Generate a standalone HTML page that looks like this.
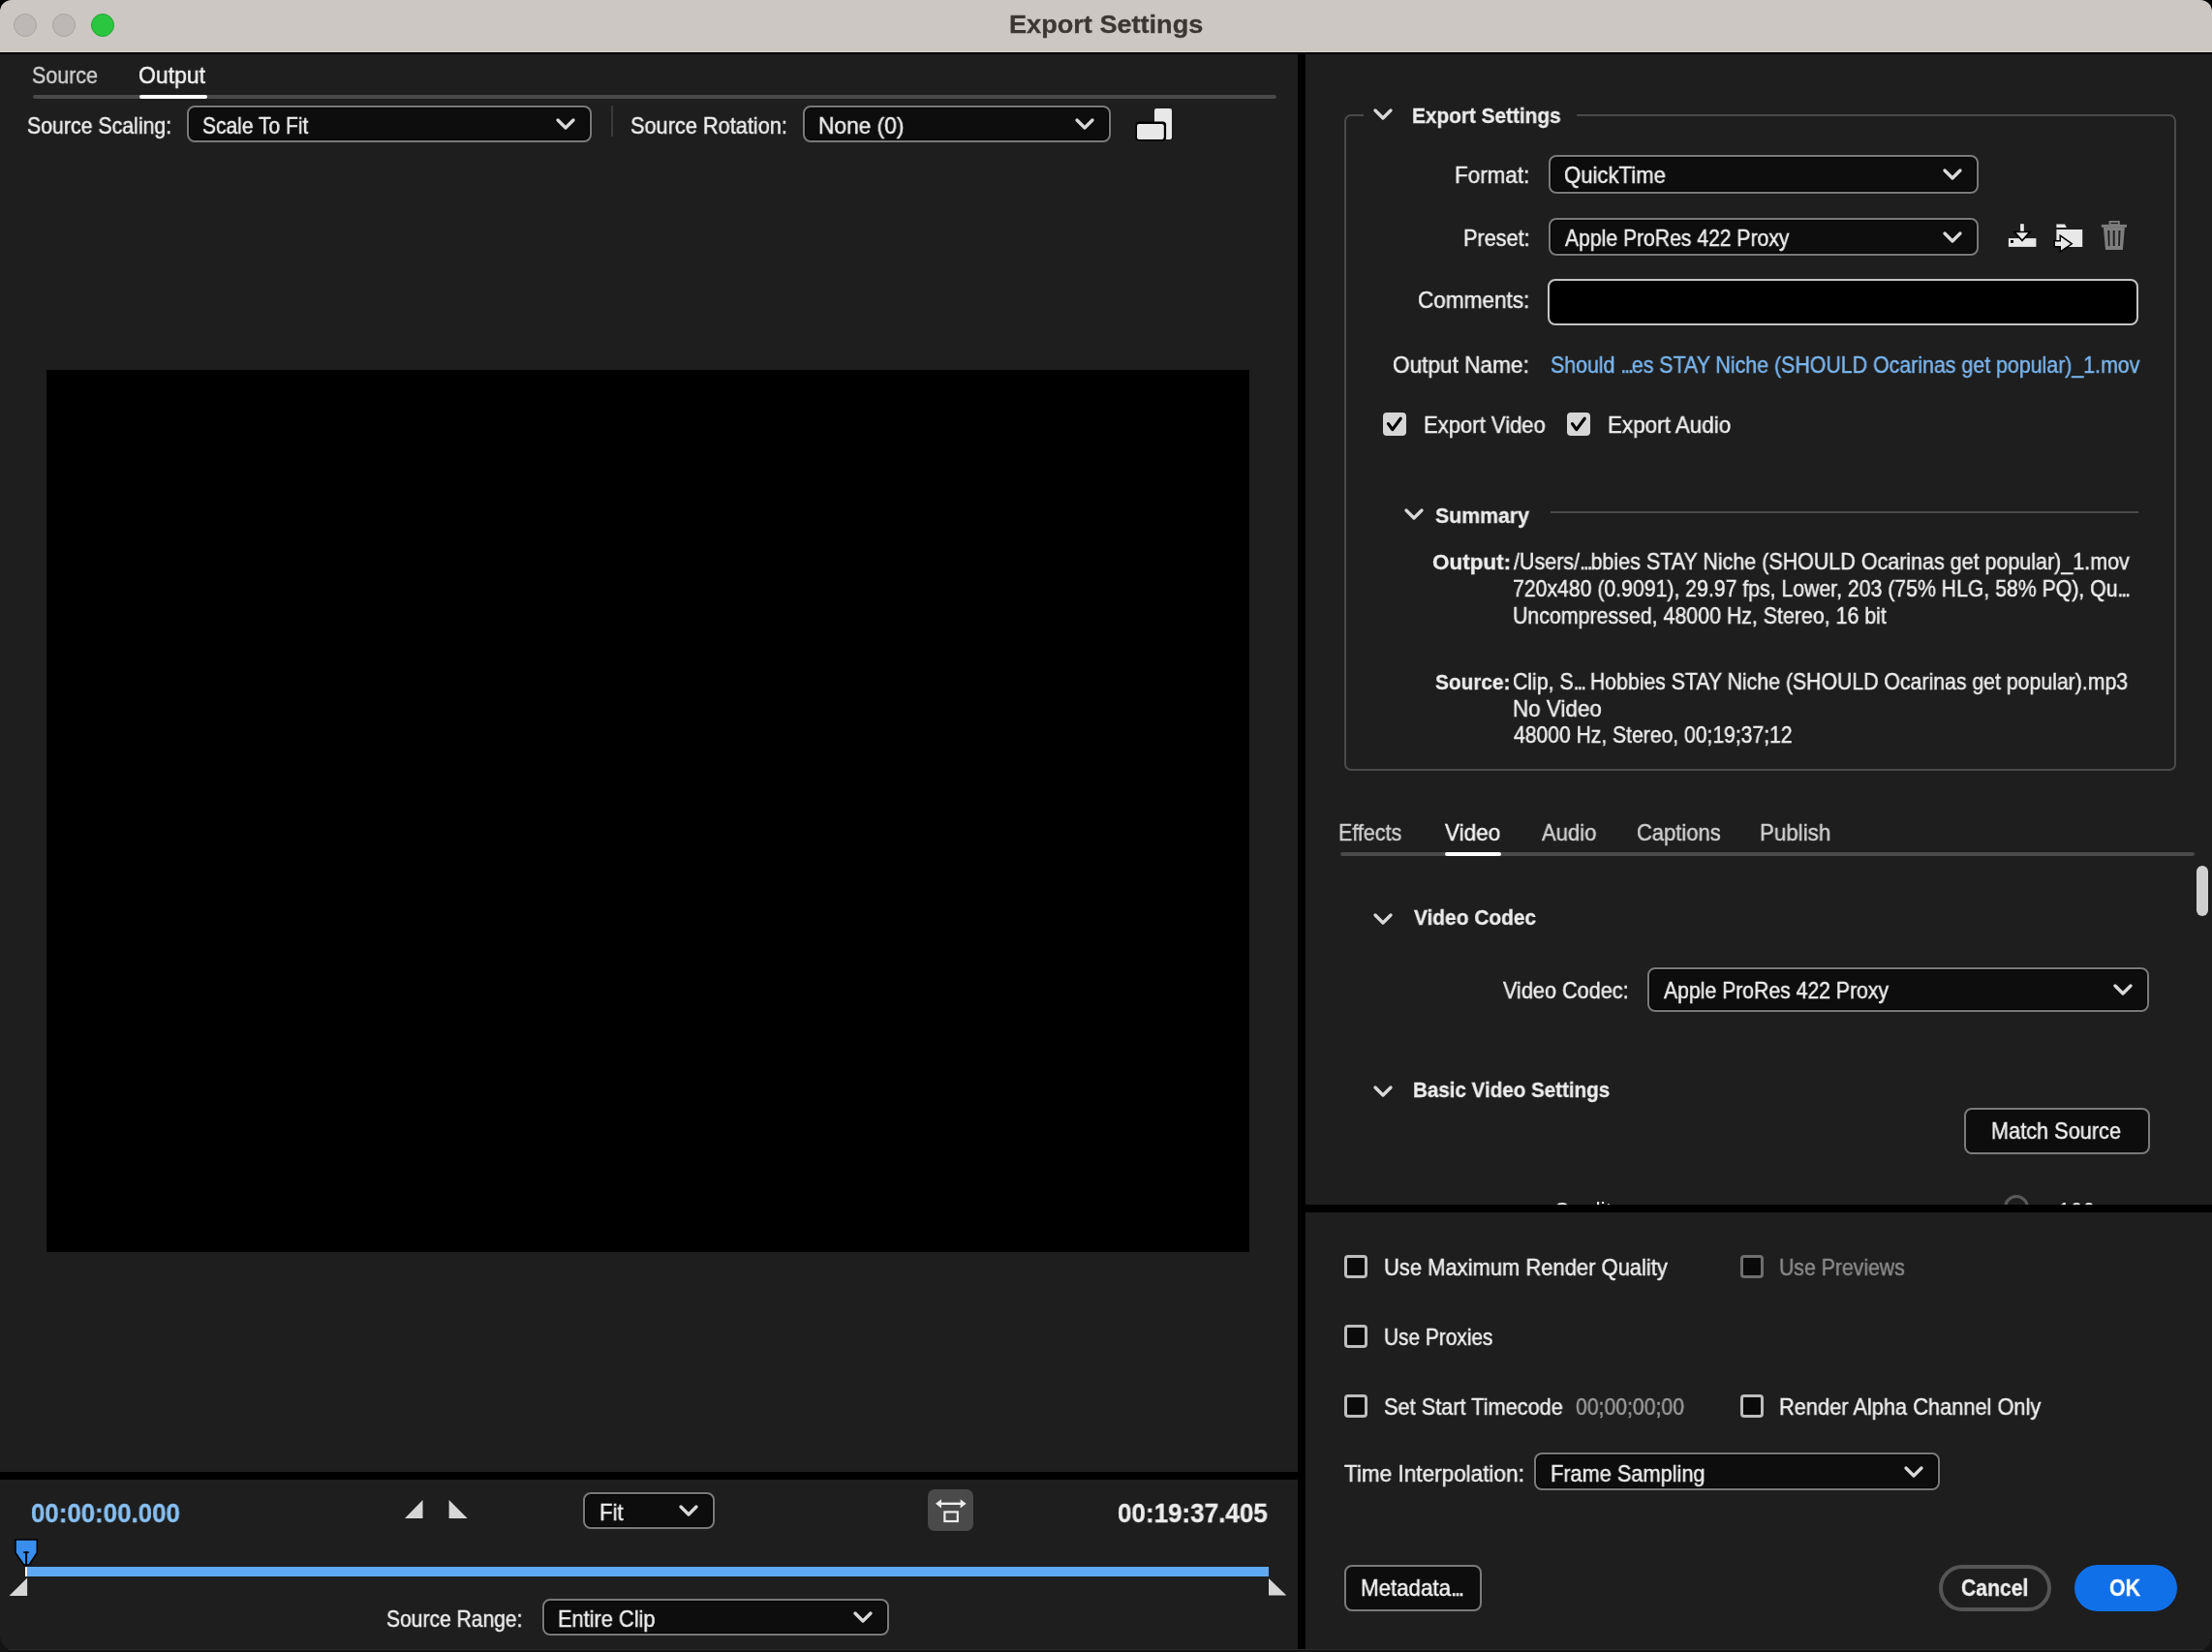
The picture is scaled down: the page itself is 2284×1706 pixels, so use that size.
<!DOCTYPE html>
<html><head><meta charset="utf-8"><style>
html,body{margin:0;padding:0;background:linear-gradient(#000 50%,#141414 50%);}
body{width:2284px;height:1706px;overflow:hidden;position:relative;font-family:'Liberation Sans', sans-serif;}
.t{position:absolute;line-height:1;white-space:pre;transform-origin:0 0;font-family:'Liberation Sans', sans-serif;will-change:transform;}
svg{overflow:visible}
</style></head><body>
<div style="position:absolute;left:0;top:0;width:2284px;height:1706px;overflow:hidden;border-radius:12px 12px 18px 18px">
<div style="position:absolute;left:0px;top:0px;width:2284px;height:1706px;background:#1E1E1E"></div><div style="position:absolute;left:0px;top:0px;width:2284px;height:54px;background:#CCC7C3"></div><div style="position:absolute;left:0px;top:52.5px;width:2284px;height:1.5px;background:#D6D2CE"></div><div style="position:absolute;left:0px;top:54px;width:2284px;height:1.5px;background:#000"></div><div style="position:absolute;left:14px;top:14px;width:24px;height:24px;box-sizing:border-box;border-radius:50%;background:#BDB8B5;border:1px solid #A9A4A1"></div><div style="position:absolute;left:54px;top:14px;width:24px;height:24px;box-sizing:border-box;border-radius:50%;background:#BDB8B5;border:1px solid #A9A4A1"></div><div style="position:absolute;left:94px;top:14px;width:24px;height:24px;box-sizing:border-box;border-radius:50%;background:#2BC63F;border:1px solid #22A533"></div><div style="position:absolute;left:34px;top:98px;width:1284px;height:4px;background:#4A4A4A;border-radius:2px"></div><div style="position:absolute;left:144px;top:98px;width:70px;height:4px;background:#FFFFFF;border-radius:2px"></div><div style="position:absolute;left:193px;top:109px;width:418px;height:38px;box-sizing:border-box;border:2px solid #7A7A7A;border-radius:8px;background:#0D0D0D;box-shadow:inset 0 0 0 1px #000"></div><svg style="position:absolute;left:570px;top:118.0px" width="28" height="20"><polyline points="6,6 14,14 22,6" fill="none" stroke="#D9D9D9" stroke-width="3.3" stroke-linecap="round" stroke-linejoin="round"/></svg><div style="position:absolute;left:631px;top:109px;width:2px;height:32px;background:#3A3A3A"></div><div style="position:absolute;left:829px;top:109px;width:318px;height:38px;box-sizing:border-box;border:2px solid #7A7A7A;border-radius:8px;background:#0D0D0D;box-shadow:inset 0 0 0 1px #000"></div><svg style="position:absolute;left:1106px;top:118.0px" width="28" height="20"><polyline points="6,6 14,14 22,6" fill="none" stroke="#D9D9D9" stroke-width="3.3" stroke-linecap="round" stroke-linejoin="round"/></svg><svg style="position:absolute;left:1170px;top:108px" width="44" height="40"><rect x="22" y="4" width="18" height="32" rx="2.2" fill="#E8E8E8"/><rect x="2.5" y="17.6" width="31.6" height="20" rx="3.5" fill="#000"/><rect x="4" y="20" width="27.8" height="16" rx="2.2" fill="#E8E8E8"/></svg><div style="position:absolute;left:48px;top:382px;width:1242px;height:911px;background:#000"></div><div style="position:absolute;left:0px;top:1520px;width:1340px;height:8px;background:#000"></div><svg style="position:absolute;left:410px;top:1545px" width="80" height="30"><polygon points="8,23 26.5,4 26.5,23" fill="#D6D6D6"/><polygon points="53.6,4 53.6,23 72.6,23" fill="#D6D6D6"/></svg><div style="position:absolute;left:602px;top:1541px;width:136px;height:38px;box-sizing:border-box;border:2px solid #7A7A7A;border-radius:8px;background:#0D0D0D;box-shadow:inset 0 0 0 1px #000"></div><svg style="position:absolute;left:697px;top:1550.0px" width="28" height="20"><polyline points="6,6 14,14 22,6" fill="none" stroke="#D9D9D9" stroke-width="3.3" stroke-linecap="round" stroke-linejoin="round"/></svg><div style="position:absolute;left:958px;top:1538px;width:47px;height:43px;background:#4A4A4A;border-radius:7px"></div><svg style="position:absolute;left:958px;top:1538px" width="47" height="43"><line x1="10.5" y1="14.8" x2="37" y2="14.8" stroke="#EDEDED" stroke-width="2.4"/><polygon points="8,14.8 14,10.2 14,19.4" fill="#EDEDED"/><polygon points="39.6,14.8 33.6,10.2 33.6,19.4" fill="#EDEDED"/><rect x="17.4" y="23.4" width="13.4" height="9.6" fill="none" stroke="#EDEDED" stroke-width="2.2"/></svg><div style="position:absolute;left:28px;top:1618px;width:1282px;height:10px;background:#5EA8F4"></div><div style="position:absolute;left:26px;top:1618px;width:2px;height:10px;background:#FFFFFF"></div><svg style="position:absolute;left:0px;top:1580px" width="60" height="80"><polygon points="16,10 38.3,10 38.3,23.5 30,36 24.5,36 16,23.5" fill="#3A8EEB" stroke="#000" stroke-width="1.5" stroke-linejoin="round"/><rect x="24.2" y="22.3" width="5.6" height="1.6" fill="#000"/><rect x="26.1" y="22.3" width="2" height="15" fill="#000"/><polygon points="9.5,68 28.1,49.6 28.1,68" fill="#D6D6D6"/></svg><svg style="position:absolute;left:1300px;top:1620px" width="40" height="40"><polygon points="10,10 10,27.5 28.3,27.5" fill="#D6D6D6"/></svg><div style="position:absolute;left:560px;top:1651px;width:358px;height:38px;box-sizing:border-box;border:2px solid #7A7A7A;border-radius:8px;background:#0D0D0D;box-shadow:inset 0 0 0 1px #000"></div><svg style="position:absolute;left:877px;top:1660.0px" width="28" height="20"><polyline points="6,6 14,14 22,6" fill="none" stroke="#D9D9D9" stroke-width="3.3" stroke-linecap="round" stroke-linejoin="round"/></svg><div style="position:absolute;left:1340px;top:55px;width:8px;height:1651px;background:#000"></div><div style="position:absolute;left:1388px;top:117.6px;width:859px;height:678.4px;box-sizing:border-box;border:2px solid #4A4A4A;border-radius:7px"></div><div style="position:absolute;left:1408px;top:110px;width:220px;height:16px;background:#1E1E1E"></div><svg style="position:absolute;left:1414px;top:108.3px" width="28" height="20"><polyline points="6,6 14,14 22,6" fill="none" stroke="#D9D9D9" stroke-width="3.3" stroke-linecap="round" stroke-linejoin="round"/></svg><div style="position:absolute;left:1599px;top:160px;width:444px;height:40px;box-sizing:border-box;border:2px solid #7A7A7A;border-radius:8px;background:#0D0D0D;box-shadow:inset 0 0 0 1px #000"></div><svg style="position:absolute;left:2002px;top:170.0px" width="28" height="20"><polyline points="6,6 14,14 22,6" fill="none" stroke="#D9D9D9" stroke-width="3.3" stroke-linecap="round" stroke-linejoin="round"/></svg><div style="position:absolute;left:1599px;top:225px;width:444px;height:39px;box-sizing:border-box;border:2px solid #7A7A7A;border-radius:8px;background:#0D0D0D;box-shadow:inset 0 0 0 1px #000"></div><svg style="position:absolute;left:2002px;top:234.5px" width="28" height="20"><polyline points="6,6 14,14 22,6" fill="none" stroke="#D9D9D9" stroke-width="3.3" stroke-linecap="round" stroke-linejoin="round"/></svg><div style="position:absolute;left:1598px;top:288px;width:610px;height:48px;box-sizing:border-box;border:2px solid #C4C4C4;border-radius:8px;background:#000"></div><svg style="position:absolute;left:2060px;top:220px" width="150" height="50"><rect x="26.1" y="11.2" width="3.7" height="9.6" fill="#E8E8E8"/><rect x="13.9" y="26.1" width="28.5" height="8.8" fill="#E8E8E8"/><polygon points="21.7,20.3 34.2,20.3 28,27.3" fill="#000" stroke="#000" stroke-width="3.2" stroke-linejoin="miter"/><polygon points="21.7,20.3 34.2,20.3 28,27.3" fill="#E8E8E8"/><rect x="16" y="28" width="3" height="3" fill="#000"/><polygon points="63.4,11.5 72,11.5 73.8,14.9 63.4,14.9" fill="#E8E8E8"/><rect x="63.4" y="17" width="26.8" height="18" fill="#E8E8E8"/><polygon points="62,29.5 68,29.5 68,24.7 78,31.7 68,38.6 68,34 62,34" fill="#000" stroke="#000" stroke-width="3" stroke-linejoin="miter"/><polygon points="62,29.5 68,29.5 68,24.7 78,31.7 68,38.6 68,34 62,34" fill="#E8E8E8"/><rect x="118.5" y="8.9" width="9.4" height="3.2" fill="none" stroke="#7E7E7E" stroke-width="1.8"/><rect x="109.8" y="11.9" width="26.2" height="2.9" fill="#7E7E7E"/><polygon points="111.9,14.5 133.9,14.5 131.9,38 114,38" fill="#7E7E7E"/><polygon points="116.3,18 118.3,18 118.6,34 116.9,34" fill="#1E1E1E"/><rect x="121.7" y="18" width="2" height="16" fill="#1E1E1E"/><polygon points="127.5,18 129.5,18 128.9,34 127.2,34" fill="#1E1E1E"/></svg><div style="position:absolute;left:1428px;top:426px;width:24px;height:24px;background:#D6D6D6;border-radius:4px"></div><svg style="position:absolute;left:1428px;top:426px" width="24" height="24"><polyline points="5.5,11.6 9.8,17.6 18.2,6.2" fill="none" stroke="#000" stroke-width="3.2" stroke-linecap="round" stroke-linejoin="round"/></svg><div style="position:absolute;left:1618px;top:426px;width:24px;height:24px;background:#D6D6D6;border-radius:4px"></div><svg style="position:absolute;left:1618px;top:426px" width="24" height="24"><polyline points="5.5,11.6 9.8,17.6 18.2,6.2" fill="none" stroke="#000" stroke-width="3.2" stroke-linecap="round" stroke-linejoin="round"/></svg><svg style="position:absolute;left:1446px;top:521.0px" width="28" height="20"><polyline points="6,6 14,14 22,6" fill="none" stroke="#D9D9D9" stroke-width="3.3" stroke-linecap="round" stroke-linejoin="round"/></svg><div style="position:absolute;left:1601px;top:528px;width:607px;height:2px;background:#4A4A4A"></div><div style="position:absolute;left:1384px;top:880px;width:882px;height:4px;background:#4A4A4A;border-radius:2px"></div><div style="position:absolute;left:1492px;top:880px;width:58px;height:4px;background:#FFFFFF;border-radius:2px"></div><div style="position:absolute;left:2268px;top:894px;width:12px;height:52px;background:#D0D0D0;border-radius:6px"></div><svg style="position:absolute;left:1414px;top:939.0px" width="28" height="20"><polyline points="6,6 14,14 22,6" fill="none" stroke="#D9D9D9" stroke-width="3.3" stroke-linecap="round" stroke-linejoin="round"/></svg><div style="position:absolute;left:1701px;top:999px;width:518px;height:46px;box-sizing:border-box;border:2px solid #7A7A7A;border-radius:8px;background:#0D0D0D;box-shadow:inset 0 0 0 1px #000"></div><svg style="position:absolute;left:2178px;top:1012.0px" width="28" height="20"><polyline points="6,6 14,14 22,6" fill="none" stroke="#D9D9D9" stroke-width="3.3" stroke-linecap="round" stroke-linejoin="round"/></svg><svg style="position:absolute;left:1414px;top:1117.0px" width="28" height="20"><polyline points="6,6 14,14 22,6" fill="none" stroke="#D9D9D9" stroke-width="3.3" stroke-linecap="round" stroke-linejoin="round"/></svg><div style="position:absolute;left:2028px;top:1144px;width:192px;height:48px;box-sizing:border-box;border:2px solid #7A7A7A;border-radius:8px;background:#0D0D0D"></div><div class="t" style="left:1604px;top:1240px;font-size:23px;color:#EDEDED">Quality</div><div style="position:absolute;left:2069px;top:1234px;width:26px;height:26px;box-sizing:border-box;border:3px solid #5A5A5A;border-radius:50%"></div><div class="t" style="left:2125px;top:1240px;font-size:23px;color:#EDEDED">100</div><div style="position:absolute;left:1348px;top:1244px;width:936px;height:8px;background:#000"></div><div style="position:absolute;left:1348px;top:1252px;width:936px;height:454px;background:#1E1E1E"></div><div style="position:absolute;left:1388px;top:1296px;width:24px;height:24px;box-sizing:border-box;border:3px solid #BDBDBD;border-radius:4px;background:#0A0A0A"></div><div style="position:absolute;left:1796.5px;top:1296px;width:24.0px;height:24px;box-sizing:border-box;border:3px solid #6E6E6E;border-radius:4px;background:#0A0A0A"></div><div style="position:absolute;left:1388px;top:1368px;width:24px;height:24px;box-sizing:border-box;border:3px solid #BDBDBD;border-radius:4px;background:#0A0A0A"></div><div style="position:absolute;left:1388px;top:1440px;width:24px;height:24px;box-sizing:border-box;border:3px solid #BDBDBD;border-radius:4px;background:#0A0A0A"></div><div style="position:absolute;left:1796.5px;top:1440px;width:24.0px;height:24px;box-sizing:border-box;border:3px solid #BDBDBD;border-radius:4px;background:#0A0A0A"></div><div style="position:absolute;left:1584px;top:1500px;width:419px;height:39px;box-sizing:border-box;border:2px solid #7A7A7A;border-radius:8px;background:#0D0D0D;box-shadow:inset 0 0 0 1px #000"></div><svg style="position:absolute;left:1962px;top:1509.5px" width="28" height="20"><polyline points="6,6 14,14 22,6" fill="none" stroke="#D9D9D9" stroke-width="3.3" stroke-linecap="round" stroke-linejoin="round"/></svg><div style="position:absolute;left:1388px;top:1616px;width:142px;height:48px;box-sizing:border-box;border:2px solid #7A7A7A;border-radius:8px;background:#0D0D0D"></div><div style="position:absolute;left:2002px;top:1616px;width:116px;height:48px;box-sizing:border-box;border:4px solid #555;border-radius:24px"></div><div style="position:absolute;left:2142px;top:1616px;width:106px;height:48px;background:#1070E8;border-radius:24px"></div><div style="position:absolute;left:0px;top:1703px;width:2284px;height:1px;background:#2A2A2A"></div><div style="position:absolute;left:0px;top:1704px;width:2284px;height:2px;background:#141414"></div>
<div class="t" style="left:1042.18px;top:11.93px;font-size:26.67px;font-weight:700;color:#3B3735;-webkit-text-stroke:0.3px #3B3735;transform:scaleX(1.0169)">Export Settings</div>
<div class="t" style="left:32.82px;top:66.05px;font-size:24.3px;font-weight:400;color:#CFCFCF;-webkit-text-stroke:0.45px #CFCFCF;transform:scaleX(0.8827)">Source</div>
<div class="t" style="left:143.16px;top:66.05px;font-size:24.3px;font-weight:400;color:#F4F4F4;-webkit-text-stroke:0.45px #F4F4F4;transform:scaleX(0.9444)">Output</div>
<div class="t" style="left:27.51px;top:118.00px;font-size:24.0px;font-weight:400;color:#EDEDED;-webkit-text-stroke:0.45px #EDEDED;transform:scaleX(0.8873)">Source Scaling:</div>
<div class="t" style="left:209.32px;top:118.00px;font-size:24.0px;font-weight:400;color:#EDEDED;-webkit-text-stroke:0.45px #EDEDED;transform:scaleX(0.8750)">Scale To Fit</div>
<div class="t" style="left:651.09px;top:118.00px;font-size:24.0px;font-weight:400;color:#EDEDED;-webkit-text-stroke:0.45px #EDEDED;transform:scaleX(0.9057)">Source Rotation:</div>
<div class="t" style="left:844.81px;top:118.00px;font-size:24.0px;font-weight:400;color:#EDEDED;-webkit-text-stroke:0.45px #EDEDED;transform:scaleX(0.9467)">None (0)</div>
<div class="t" style="left:31.65px;top:1548.66px;font-size:27.11px;font-weight:700;color:#88C0F3;-webkit-text-stroke:0.3px #88C0F3;transform:scaleX(0.9537)">00:00:00.000</div>
<div class="t" style="left:618.86px;top:1550.20px;font-size:24.0px;font-weight:400;color:#EDEDED;-webkit-text-stroke:0.45px #EDEDED;transform:scaleX(0.9200)">Fit</div>
<div class="t" style="left:1154.04px;top:1548.66px;font-size:27.11px;font-weight:700;color:#EDEDED;-webkit-text-stroke:0.3px #EDEDED;transform:scaleX(0.9594)">00:19:37.405</div>
<div class="t" style="left:399.42px;top:1660.00px;font-size:24.0px;font-weight:400;color:#EDEDED;-webkit-text-stroke:0.45px #EDEDED;transform:scaleX(0.8771)">Source Range:</div>
<div class="t" style="left:575.68px;top:1660.00px;font-size:24.0px;font-weight:400;color:#EDEDED;-webkit-text-stroke:0.45px #EDEDED;transform:scaleX(0.9083)">Entire Clip</div>
<div class="t" style="left:1457.58px;top:109.26px;font-size:22.52px;font-weight:700;color:#EDEDED;-webkit-text-stroke:0.3px #EDEDED;transform:scaleX(0.9242)">Export Settings</div>
<div class="t" style="left:1501.55px;top:170.25px;font-size:23.7px;font-weight:400;color:#EDEDED;-webkit-text-stroke:0.45px #EDEDED;transform:scaleX(0.9468)">Format:</div>
<div class="t" style="left:1615.47px;top:170.05px;font-size:23.7px;font-weight:400;color:#EDEDED;-webkit-text-stroke:0.45px #EDEDED;transform:scaleX(0.9333)">QuickTime</div>
<div class="t" style="left:1510.69px;top:234.85px;font-size:23.7px;font-weight:400;color:#EDEDED;-webkit-text-stroke:0.45px #EDEDED;transform:scaleX(0.9139)">Preset:</div>
<div class="t" style="left:1616.00px;top:234.85px;font-size:23.7px;font-weight:400;color:#EDEDED;-webkit-text-stroke:0.45px #EDEDED;transform:scaleX(0.8923)">Apple ProRes 422 Proxy</div>
<div class="t" style="left:1464.05px;top:299.36px;font-size:23.7px;font-weight:400;color:#EDEDED;-webkit-text-stroke:0.45px #EDEDED;transform:scaleX(0.9525)">Comments:</div>
<div class="t" style="left:1438.05px;top:365.56px;font-size:23.7px;font-weight:400;color:#EDEDED;-webkit-text-stroke:0.45px #EDEDED;transform:scaleX(0.9545)">Output Name:</div>
<div class="t" style="left:1601.10px;top:365.56px;font-size:23.7px;font-weight:400;color:#7AB6EF;-webkit-text-stroke:0.45px #7AB6EF;transform:scaleX(0.9015)">Should <span style="letter-spacing:-0.1em">...</span>es STAY Niche (SHOULD Ocarinas get popular)_1.mov</div>
<div class="t" style="left:1469.77px;top:427.56px;font-size:23.7px;font-weight:400;color:#EDEDED;-webkit-text-stroke:0.45px #EDEDED;transform:scaleX(0.9306)">Export Video</div>
<div class="t" style="left:1659.75px;top:427.56px;font-size:23.7px;font-weight:400;color:#EDEDED;-webkit-text-stroke:0.45px #EDEDED;transform:scaleX(0.9466)">Export Audio</div>
<div class="t" style="left:1482.00px;top:521.56px;font-size:22.52px;font-weight:700;color:#EDEDED;-webkit-text-stroke:0.3px #EDEDED;transform:scaleX(0.9456)">Summary</div>
<div class="t" style="left:1479.00px;top:569.56px;font-size:22.52px;font-weight:700;color:#EDEDED;-webkit-text-stroke:0.3px #EDEDED;transform:scaleX(0.9974)">Output:</div>
<div class="t" style="left:1563.00px;top:568.56px;font-size:23.7px;font-weight:400;color:#EDEDED;-webkit-text-stroke:0.45px #EDEDED;transform:scaleX(0.9067)">/Users/<span style="letter-spacing:-0.1em">...</span>bbies STAY Niche (SHOULD Ocarinas get popular)_1.mov</div>
<div class="t" style="left:1562.10px;top:596.76px;font-size:23.7px;font-weight:400;color:#EDEDED;-webkit-text-stroke:0.45px #EDEDED;transform:scaleX(0.8965)">720x480 (0.9091), 29.97 fps, Lower, 203 (75% HLG, 58% PQ), Qu<span style="letter-spacing:-0.1em">...</span></div>
<div class="t" style="left:1562.10px;top:624.56px;font-size:23.7px;font-weight:400;color:#EDEDED;-webkit-text-stroke:0.45px #EDEDED;transform:scaleX(0.9016)">Uncompressed, 48000 Hz, Stereo, 16 bit</div>
<div class="t" style="left:1482.00px;top:693.76px;font-size:22.52px;font-weight:700;color:#EDEDED;-webkit-text-stroke:0.3px #EDEDED;transform:scaleX(0.9244)">Source:</div>
<div class="t" style="left:1562.10px;top:692.76px;font-size:23.7px;font-weight:400;color:#EDEDED;-webkit-text-stroke:0.45px #EDEDED;transform:scaleX(0.8973)">Clip, S<span style="letter-spacing:-0.1em">...</span> Hobbies STAY Niche (SHOULD Ocarinas get popular).mp3</div>
<div class="t" style="left:1562.05px;top:720.56px;font-size:23.7px;font-weight:400;color:#EDEDED;-webkit-text-stroke:0.45px #EDEDED;transform:scaleX(0.9474)">No Video</div>
<div class="t" style="left:1563.00px;top:748.36px;font-size:23.7px;font-weight:400;color:#EDEDED;-webkit-text-stroke:0.45px #EDEDED;transform:scaleX(0.8913)">48000 Hz, Stereo, 00;19;37;12</div>
<div class="t" style="left:1382.23px;top:848.35px;font-size:24.3px;font-weight:400;color:#CFCFCF;-webkit-text-stroke:0.45px #CFCFCF;transform:scaleX(0.8831)">Effects</div>
<div class="t" style="left:1491.50px;top:848.35px;font-size:24.3px;font-weight:400;color:#F4F4F4;-webkit-text-stroke:0.45px #F4F4F4;transform:scaleX(0.9262)">Video</div>
<div class="t" style="left:1591.80px;top:848.35px;font-size:24.3px;font-weight:400;color:#CFCFCF;-webkit-text-stroke:0.45px #CFCFCF;transform:scaleX(0.9065)">Audio</div>
<div class="t" style="left:1690.10px;top:848.35px;font-size:24.3px;font-weight:400;color:#CFCFCF;-webkit-text-stroke:0.45px #CFCFCF;transform:scaleX(0.9043)">Captions</div>
<div class="t" style="left:1817.16px;top:848.35px;font-size:24.3px;font-weight:400;color:#CFCFCF;-webkit-text-stroke:0.45px #CFCFCF;transform:scaleX(0.9182)">Publish</div>
<div class="t" style="left:1460.00px;top:937.36px;font-size:22.52px;font-weight:700;color:#EDEDED;-webkit-text-stroke:0.3px #EDEDED;transform:scaleX(0.9265)">Video Codec</div>
<div class="t" style="left:1552.00px;top:1012.36px;font-size:23.7px;font-weight:400;color:#EDEDED;-webkit-text-stroke:0.45px #EDEDED;transform:scaleX(0.9143)">Video Codec:</div>
<div class="t" style="left:1717.70px;top:1012.36px;font-size:23.7px;font-weight:400;color:#EDEDED;-webkit-text-stroke:0.45px #EDEDED;transform:scaleX(0.8946)">Apple ProRes 422 Proxy</div>
<div class="t" style="left:1459.09px;top:1114.96px;font-size:22.52px;font-weight:700;color:#EDEDED;-webkit-text-stroke:0.3px #EDEDED;transform:scaleX(0.9140)">Basic Video Settings</div>
<div class="t" style="left:2056.08px;top:1156.56px;font-size:23.7px;font-weight:400;color:#EDEDED;-webkit-text-stroke:0.45px #EDEDED;transform:scaleX(0.9172)">Match Source</div>
<div class="t" style="left:1429.07px;top:1297.76px;font-size:23.7px;font-weight:400;color:#EDEDED;-webkit-text-stroke:0.45px #EDEDED;transform:scaleX(0.9270)">Use Maximum Render Quality</div>
<div class="t" style="left:1837.40px;top:1297.76px;font-size:23.7px;font-weight:400;color:#8A8A8A;-webkit-text-stroke:0.45px #8A8A8A;transform:scaleX(0.8965)">Use Previews</div>
<div class="t" style="left:1429.12px;top:1369.56px;font-size:23.7px;font-weight:400;color:#EDEDED;-webkit-text-stroke:0.45px #EDEDED;transform:scaleX(0.8802)">Use Proxies</div>
<div class="t" style="left:1429.08px;top:1441.86px;font-size:23.7px;font-weight:400;color:#EDEDED;-webkit-text-stroke:0.45px #EDEDED;transform:scaleX(0.9175)">Set Start Timecode</div>
<div class="t" style="left:1626.50px;top:1441.86px;font-size:23.7px;font-weight:400;color:#9A9A9A;-webkit-text-stroke:0.45px #9A9A9A;transform:scaleX(0.8952)">00;00;00;00</div>
<div class="t" style="left:1837.08px;top:1441.86px;font-size:23.7px;font-weight:400;color:#EDEDED;-webkit-text-stroke:0.45px #EDEDED;transform:scaleX(0.9205)">Render Alpha Channel Only</div>
<div class="t" style="left:1388.40px;top:1510.56px;font-size:23.7px;font-weight:400;color:#EDEDED;-webkit-text-stroke:0.45px #EDEDED;transform:scaleX(0.9515)">Time Interpolation:</div>
<div class="t" style="left:1601.38px;top:1510.56px;font-size:23.7px;font-weight:400;color:#EDEDED;-webkit-text-stroke:0.45px #EDEDED;transform:scaleX(0.9180)">Frame Sampling</div>
<div class="t" style="left:1404.94px;top:1628.30px;font-size:24.0px;font-weight:400;color:#F2F2F2;-webkit-text-stroke:0.45px #F2F2F2;transform:scaleX(0.9297)">Metadata<span style="letter-spacing:-0.1em">...</span></div>
<div class="t" style="left:2025.12px;top:1627.80px;font-size:24.0px;font-weight:700;color:#EDEDED;-webkit-text-stroke:0.3px #EDEDED;transform:scaleX(0.8816)">Cancel</div>
<div class="t" style="left:2178.41px;top:1627.80px;font-size:24.0px;font-weight:700;color:#FFFFFF;-webkit-text-stroke:0.3px #FFFFFF;transform:scaleX(0.8886)">OK</div>
</div>
</body></html>
